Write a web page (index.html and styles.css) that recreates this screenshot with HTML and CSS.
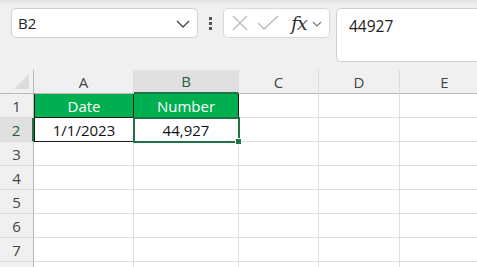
FILE: index.html
```html
<!DOCTYPE html>
<html>
<head>
    <title>Sheet</title>
    <link rel="stylesheet" href="styles.css">
</head>
<body>
    <div class="topbar"></div>
    <div class="formula-bar">
        <div class="name-box">
            <span class="name-text">B2</span>
            <svg class="chev" width="14" height="8" viewBox="0 0 14 8"><path d="M1 1 L7 7 L13 1" fill="none" stroke="#444" stroke-width="1.3"/></svg>
        </div>
        <div class="dots"><span></span><span></span><span></span></div>
        <div class="fx-box">
            <svg class="ico" width="18" height="18" viewBox="0 0 18 18"><path d="M2 2 L16 16 M16 2 L2 16" stroke="#b8b8b8" stroke-width="1.3" fill="none"/></svg>
            <svg class="ico" width="22" height="18" viewBox="0 0 22 18"><path d="M1 9 L7 15 L21 2" stroke="#b8b8b8" stroke-width="1.3" fill="none"/></svg>
            <span class="fx">fx</span>
            <svg class="chev-sm" width="10" height="6" viewBox="0 0 10 6"><path d="M1 1 L5 5 L9 1" fill="none" stroke="#777" stroke-width="1.1"/></svg>
        </div>
        <div class="formula-box">44927</div>
    </div>

    <div class="grid">
        <div class="corner"><span class="tri"></span></div>
        <div class="col-head">A</div>
        <div class="col-head sel">B</div>
        <div class="col-head">C</div>
        <div class="col-head">D</div>
        <div class="col-head">E</div>

        <div class="row-head">1</div>
        <div class="cell head-cell bl">Date</div>
        <div class="cell head-cell">Number</div>
        <div class="cell"></div><div class="cell"></div><div class="cell"></div>

        <div class="row-head sel">2</div>
        <div class="cell data bl">1/1/2023</div>
        <div class="cell data active">44,927</div>
        <div class="cell"></div><div class="cell"></div><div class="cell"></div>

        <div class="row-head">3</div>
        <div class="cell"></div><div class="cell"></div><div class="cell"></div><div class="cell"></div><div class="cell"></div>
        <div class="row-head">4</div>
        <div class="cell"></div><div class="cell"></div><div class="cell"></div><div class="cell"></div><div class="cell"></div>
        <div class="row-head">5</div>
        <div class="cell"></div><div class="cell"></div><div class="cell"></div><div class="cell"></div><div class="cell"></div>
        <div class="row-head">6</div>
        <div class="cell"></div><div class="cell"></div><div class="cell"></div><div class="cell"></div><div class="cell"></div>
        <div class="row-head">7</div>
        <div class="cell"></div><div class="cell"></div><div class="cell"></div><div class="cell"></div><div class="cell"></div>
        <div class="row-head"></div>
        <div class="cell"></div><div class="cell"></div><div class="cell"></div><div class="cell"></div><div class="cell"></div>
    </div>
</body>
</html>
```

FILE: styles.css
```css
body {
    margin: 0;
    background: #f0f0f0;
    font-family: "Open Sans", "Noto Sans", sans-serif;
    color: #222;
    overflow: hidden;
    width: 477px;
    height: 267px;
}
.topbar {
    height: 5px;
    background: linear-gradient(#e2e2e2, #f0f0f0);
}
.formula-bar {
    display: flex;
    align-items: flex-start;
    height: 65px;
    padding-top: 3px;
    box-sizing: border-box;
}
.name-box {
    margin-left: 11px;
    width: 187px;
    height: 30px;
    box-sizing: border-box;
    background: #fff;
    border: 1px solid #d0d0d0;
    border-radius: 5px;
    display: flex;
    align-items: center;
    justify-content: space-between;
    padding: 0 7px 0 6px;
}
.name-text {
    font-size: 15px;
    color: #222;
}
.chev {
    margin-top: 1px;
}
.dots {
    width: 25px;
    height: 30px;
    display: flex;
    flex-direction: column;
    align-items: center;
    justify-content: center;
    gap: 2px;
}
.dots span {
    width: 3px;
    height: 3px;
    background: #555;
}
.fx-box {
    width: 107px;
    height: 30px;
    box-sizing: border-box;
    background: #fff;
    border: 1px solid #d8d8d8;
    border-radius: 5px;
    display: flex;
    align-items: center;
    padding-left: 7px;
}
.ico {
    margin-right: 8px;
}
.fx {
    font-family: "DejaVu Serif", "Liberation Serif", serif;
    font-style: italic;
    font-size: 19px;
    color: #333;
    margin-left: 4px;
    letter-spacing: -1px;
}
.chev-sm {
    margin-left: 5px;
    margin-top: 2px;
}
.formula-box {
    margin-left: 6px;
    flex: 1;
    height: 54px;
    box-sizing: border-box;
    background: #fff;
    border: 1px solid #d0d0d0;
    border-right: none;
    border-radius: 5px 0 0 5px;
    padding: 6px 12px;
    font-size: 15.5px;
    color: #222;
}
.grid {
    display: grid;
    grid-template-columns: 34px 100px 105px 80px 81px 90px;
    grid-auto-rows: 24px;
    font-size: 15px;
}
.grid > div {
    box-sizing: border-box;
    display: flex;
    align-items: center;
    justify-content: center;
}
.corner {
    position: relative;
    border-right: 1px solid #b8b8b8;
    border-bottom: 1px solid #b8b8b8;
}
.tri {
    position: absolute;
    right: 4px;
    bottom: 4px;
    width: 0;
    height: 0;
    border-left: 15px solid transparent;
    border-bottom: 15px solid #dcdcdc;
}
.col-head {
    color: #444;
    border-right: 1px solid #dcdcdc;
    border-bottom: 1px solid #b8b8b8;
}
.col-head.sel {
    background: #e0e0e0;
    border-bottom: 2px solid #217346;
    color: #1e5e3a;
}
.row-head {
    color: #444;
    border-right: 1px solid #b8b8b8;
    border-bottom: 1px solid #dcdcdc;
}
.row-head.sel {
    background: #e0e0e0;
    border-right: 2px solid #217346;
    color: #1e5e3a;
}
.cell {
    background: #fff;
    border-right: 1px solid #dedede;
    border-bottom: 1px solid #dedede;
}
.head-cell {
    background: #00b050;
    color: #fff;
    border-right: 1px solid #1a1a1a;
    border-bottom: 1px solid #1a1a1a;
}
.data {
    color: #111;
    border-right: 1px solid #1a1a1a;
    border-bottom: 1px solid #1a1a1a;
}
.bl {
    border-left: 1px solid #1a1a1a;
}
.active {
    position: relative;
    outline: 2px solid #217346;
    outline-offset: -1px;
}
.active::after {
    content: "";
    position: absolute;
    right: -4px;
    bottom: -4px;
    width: 5px;
    height: 5px;
    background: #217346;
    border: 1px solid #fff;
}
```
